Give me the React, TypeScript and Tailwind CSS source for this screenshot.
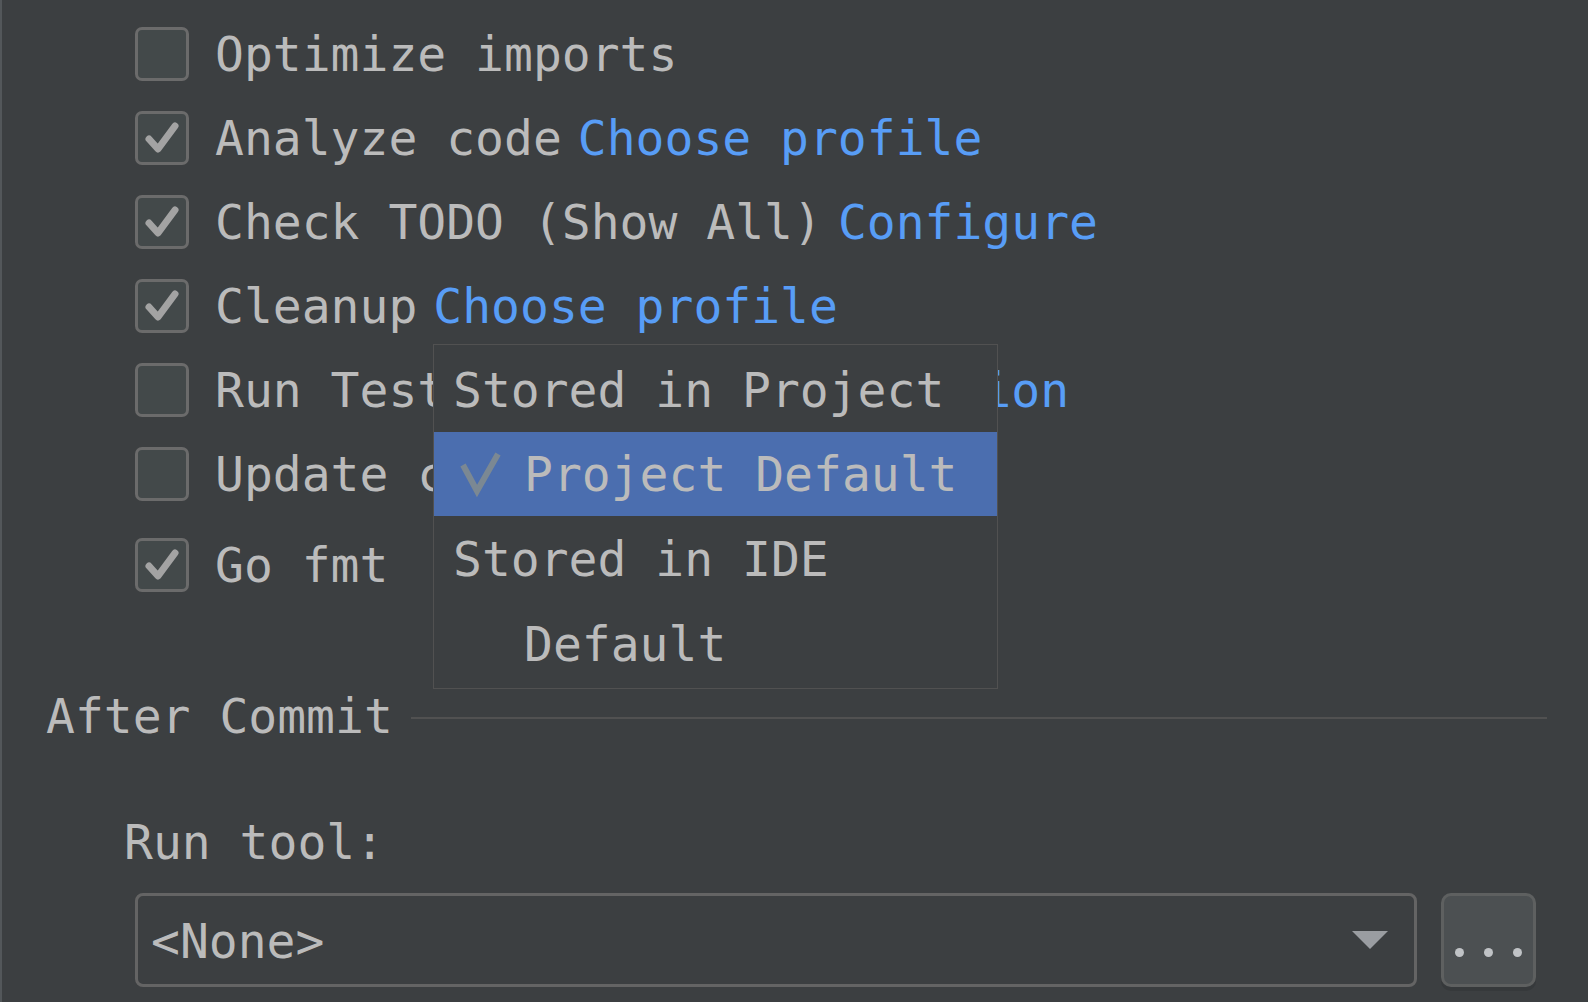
import React from "react";

const font = "font-['DejaVu_Sans_Mono','Liberation_Mono',monospace]";

type Row = { label: string; checked: boolean; link?: string };

const rows: Row[] = [
  { label: "Optimize imports", checked: false },
  { label: "Analyze code", checked: true, link: "Choose profile" },
  { label: "Check TODO (Show All)", checked: true, link: "Configure" },
  { label: "Cleanup", checked: true, link: "Choose profile" },
  { label: "Run Tests", checked: false, link: "Choose configuration" },
  { label: "Update copyright", checked: false },
];

function Checkbox({ checked }: { checked: boolean }) {
  return (
    <div className="w-[54px] h-[54px] shrink-0 rounded-[7px] border-[3px] border-[#6b6b6b] bg-[#43494a]">
      {checked && (
        <svg width="48" height="48" viewBox="0 0 48 48">
          <path
            d="M11 25 L20 35 L37 12"
            fill="none"
            stroke="#a3a3a3"
            strokeWidth="7"
            strokeLinecap="round"
            strokeLinejoin="round"
          />
        </svg>
      )}
    </div>
  );
}

function CheckRow({ row }: { row: Row }) {
  return (
    <div className="h-[84px] flex items-center">
      <Checkbox checked={row.checked} />
      <span className="ml-[26px] whitespace-pre text-[#bbbbbb]">{row.label}</span>
      {row.link && <span className="ml-[16px] whitespace-pre text-[#589df6]">{row.link}</span>}
    </div>
  );
}

function PopupMenu() {
  return (
    <div className="absolute left-[431px] top-[344px] w-[565px] h-[345px] border border-[#515151] bg-[#3c3f41] py-[2px] text-[#bbbbbb]">
      <div className="h-[85px] flex items-center pl-[19px] whitespace-pre">Stored in Project</div>
      <div className="h-[84px] flex items-center bg-[#4b6eaf] whitespace-pre">
        <svg width="90" height="84" viewBox="0 0 90 84" className="shrink-0">
          <path d="M29 33 L43 59 L64 22" fill="none" stroke="#7b8893" strokeWidth="6" />
        </svg>
        <span>Project Default</span>
      </div>
      <div className="h-[86px] flex items-center pl-[19px] whitespace-pre">Stored in IDE</div>
      <div className="h-[84px] flex items-center pl-[90px] whitespace-pre">Default</div>
    </div>
  );
}

export default function App() {
  return (
    <div
      className={`${font} relative w-[1588px] h-[1002px] overflow-hidden bg-[#3c3f41] border-l-2 border-[#53575a] text-[48px] leading-none`}
    >
      <div className="pl-[133px] pt-[12px]">
        {rows.map((r) => (
          <CheckRow key={r.label} row={r} />
        ))}
        <div className="mt-[7px]">
          <CheckRow row={{ label: "Go fmt", checked: true }} />
        </div>
      </div>

      <div className="mt-[85px] ml-[44px] mr-[41px] h-[48px] flex items-center">
        <span className="whitespace-pre text-[#bbbbbb]">After Commit</span>
        <div className="ml-[18px] mt-[4px] flex-1 h-[2px] bg-[#515151]" />
      </div>

      <div className="mt-[78px] ml-[122px] h-[48px] flex items-center text-[#bbbbbb] whitespace-pre">
        Run tool:
      </div>

      <div className="mt-[27px] ml-[133px] flex items-stretch gap-[24px]">
        <div className="w-[1282px] h-[94px] rounded-[8px] border-[3px] border-[#646464] bg-[#3c3f41] flex items-center pl-[13px] pr-[26px]">
          <span className="flex-1 text-[#bbbbbb] whitespace-pre pt-[2px]">&lt;None&gt;</span>
          <svg width="36" height="20" viewBox="0 0 36 20">
            <path d="M0 1 L36 1 L18 19 Z" fill="#9a9da1" />
          </svg>
        </div>
        <div className="w-[95px] h-[94px] rounded-[10px] border-[3px] border-[#5e6060] bg-[#4c5052] shadow-[0_4px_0_#36393b] flex items-center justify-center gap-[20px] pt-[24px]">
          <span className="w-[9px] h-[9px] rounded-full bg-[#c0c3c6]" />
          <span className="w-[9px] h-[9px] rounded-full bg-[#c0c3c6]" />
          <span className="w-[9px] h-[9px] rounded-full bg-[#c0c3c6]" />
        </div>
      </div>

      <PopupMenu />
    </div>
  );
}
